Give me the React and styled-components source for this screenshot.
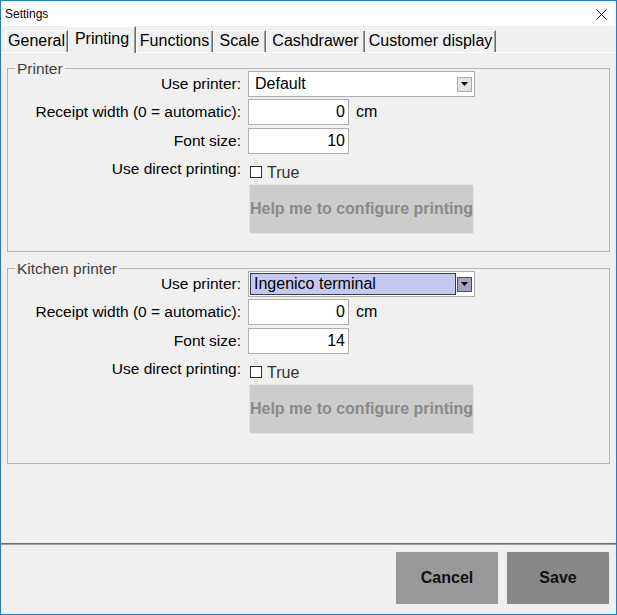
import React from "react";
import styled, { createGlobalStyle } from "styled-components";

const GlobalStyle = createGlobalStyle`
    * { box-sizing: border-box; }
    body {
        margin: 0;
        background: #f0f0f0;
        font-family: "Liberation Sans", Arial, sans-serif;
    }
`;

const tabs = [
    { name: "General", width: 63 },
    { name: "Printing", width: 68 },
    { name: "Functions", width: 77 },
    { name: "Scale", width: 53 },
    { name: "Cashdrawer", width: 99 },
    { name: "Customer display", width: 131 },
];

function Select({ value, focused }) {
    return (
        <SelectBox>
            <SelectInner $focused={focused}>{value}</SelectInner>
            <ArrowBox $focused={focused}>
                <svg width="7" height="4" viewBox="0 0 7 4">
                    <path d="M0 0h7L3.5 4z" fill="#000" />
                </svg>
            </ArrowBox>
        </SelectBox>
    );
}

function PrinterGroup({ title, printer, focused, fontSize, bottom }) {
    return (
        <Group $bottom={bottom}>
            <Legend>{title}</Legend>
            <Row>
                <Label>Use printer:</Label>
                <Select value={printer} focused={focused} />
            </Row>
            <Row $top={2}>
                <Label>Receipt width (0 = automatic):</Label>
                <Inline>
                    <NumInput>0</NumInput>
                    <Unit>cm</Unit>
                </Inline>
            </Row>
            <Row $top={3}>
                <Label>Font size:</Label>
                <NumInput>{fontSize}</NumInput>
            </Row>
            <Row $top={2}>
                <Label>Use direct printing:</Label>
                <Check>
                    <Box />
                    True
                </Check>
            </Row>
            <Row $top={2}>
                <span />
                <HelpButton>Help me to configure printing</HelpButton>
            </Row>
        </Group>
    );
}

function App() {
    return (
        <Window>
            <GlobalStyle />
            <TitleBar>
                <span>Settings</span>
                <svg width="11" height="11" viewBox="0 0 11 11">
                    <path d="M0.5 0.5l10 10M10.5 0.5l-10 10" stroke="#000" strokeWidth="1" />
                </svg>
            </TitleBar>
            <TabStrip>
                {tabs.map((t) => (
                    <Tab key={t.name} $width={t.width} $active={t.name === "Printing"}>
                        {t.name}
                    </Tab>
                ))}
            </TabStrip>
            <Panel>
                <PrinterGroup title="Printer" printer="Default" fontSize="10" bottom={17} />
                <PrinterGroup title="Kitchen printer" printer="Ingenico terminal" focused fontSize="14" bottom={29} />
            </Panel>
            <Footer>
                <ActionButton $bg="#999999">Cancel</ActionButton>
                <ActionButton $bg="#888888">Save</ActionButton>
            </Footer>
        </Window>
    );
}

// Style :
const Window = styled.div`
    width: 617px;
    height: 615px;
    border: 1px solid #1a7fd5;
    display: flex;
    flex-direction: column;
    background: #f0f0f0;
    color: #000;
`;

const TitleBar = styled.div`
    height: 25px;
    background: #fff;
    display: flex;
    align-items: center;
    justify-content: space-between;
    padding: 0 9px 0 4px;
    font-size: 12px;
    color: #000;

    svg {
        margin-top: 1px;
    }
`;

const TabStrip = styled.div`
    height: 26px;
    display: flex;
    align-items: flex-end;
    padding-left: 4px;
    position: relative;
    z-index: 1;
`;

const Tab = styled.div`
    width: ${(p) => p.$width}px;
    height: ${(p) => (p.$active ? "27px" : "22px")};
    margin-bottom: ${(p) => (p.$active ? "-1px" : "0")};
    padding-top: ${(p) => (p.$active ? "3px" : "1px")};
    text-align: center;
    line-height: 18px;
    font-size: 16px;
    background: #f0f0f0;
    border-top: 1px solid #fff;
    border-left: 1px solid #fff;
    border-right: 1px solid #6e6e6e;
    box-shadow: inset -1px 0 0 #a0a0a0;
    white-space: nowrap;
`;

const Panel = styled.div`
    flex: 1;
    border-top: 1px solid #fff;
    border-bottom: 1px solid #6d6d6d;
    box-shadow: 0 1px 0 #a0a0a0;
    padding: 15px 6px 0 6px;
    display: flex;
    flex-direction: column;
    gap: 16px;
`;

const Group = styled.div`
    border: 1px solid #b4b4b4;
    padding-bottom: ${(p) => p.$bottom}px;
    display: flex;
    flex-direction: column;
`;

const Legend = styled.div`
    align-self: flex-start;
    margin: -9px 0 -7px 7px;
    padding: 0 2px;
    background: #f0f0f0;
    font-size: 15.5px;
    line-height: 18px;
    color: #404040;
    position: relative;
`;

const Row = styled.div`
    display: grid;
    grid-template-columns: 233px 1fr;
    column-gap: 7px;
    align-items: start;
    margin-top: ${(p) => p.$top || 0}px;
`;

const Label = styled.div`
    text-align: right;
    font-size: 15.5px;
    line-height: 18px;
    padding-top: 4px;
    white-space: nowrap;
`;

const SelectBox = styled.div`
    width: 227px;
    height: 26px;
    border: 1px solid #adadad;
    background: #fff;
    padding: 1px 2px 1px 1px;
    display: flex;
    align-items: center;
    gap: 1px;
`;

const SelectInner = styled.div`
    flex: 1;
    height: 22px;
    padding-left: ${(p) => (p.$focused ? "3px" : "4px")};
    line-height: 20px;
    font-size: 16px;
    background: ${(p) => (p.$focused ? "#c6c9ef" : "#fff")};
    border: 1px solid ${(p) => (p.$focused ? "#3a3a4a" : "#fff")};
`;

const ArrowBox = styled.div`
    width: 15px;
    height: 15px;
    border: 1px solid ${(p) => (p.$focused ? "#4a4a5a" : "#adadad")};
    background: ${(p) => (p.$focused ? "#a3a4bd" : "#e3e3e3")};
    display: flex;
    align-items: center;
    justify-content: center;
`;

const Inline = styled.div`
    display: flex;
    align-items: center;
    gap: 7px;
`;

const NumInput = styled.div`
    width: 101px;
    height: 26px;
    border: 1px solid #adadad;
    background: #fff;
    text-align: right;
    padding-right: 3px;
    font-size: 16px;
    line-height: 24px;
`;

const Unit = styled.span`
    font-size: 16px;
    margin-top: -1px;
`;

const Check = styled.div`
    display: flex;
    align-items: flex-start;
    gap: 5px;
    font-size: 16px;
    line-height: 18px;
    padding: 8px 0 0 2px;
    color: #333;
`;

const Box = styled.span`
    width: 12px;
    height: 12px;
    margin-top: 2px;
    border: 1px solid #333;
    background: #fff;
`;

const HelpButton = styled.div`
    margin-left: 1px;
    width: 225px;
    height: 50px;
    background: #cccccc;
    border: 1px solid #e2e2e2;
    border-radius: 2px;
    display: flex;
    align-items: center;
    justify-content: center;
    font-size: 16px;
    font-weight: bold;
    color: #8a8a8a;
    white-space: nowrap;
`;

const Footer = styled.div`
    height: 70px;
    display: flex;
    justify-content: flex-end;
    align-items: flex-start;
    gap: 7px;
    padding: 7px 6px 0 0;
`;

const ActionButton = styled.div`
    width: 104px;
    height: 54px;
    background: ${(p) => p.$bg};
    border: 1px solid #ececec;
    border-radius: 2px;
    display: flex;
    align-items: center;
    justify-content: center;
    font-size: 16px;
    font-weight: bold;
    color: #111;
`;

export default App;
